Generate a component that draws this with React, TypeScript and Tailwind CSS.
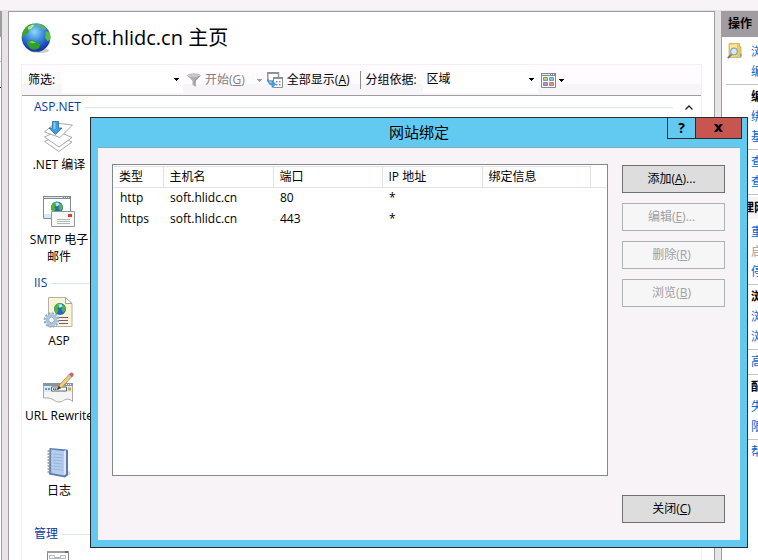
import type { ReactNode } from 'react';

const Globe = ({ className = '' }: { className?: string }) => (
  <svg viewBox="0 0 32 32" className={className} aria-hidden="true">
    <defs>
      <radialGradient id="sea" cx="0.45" cy="0.3" r="0.75">
        <stop offset="0" stopColor="#8fd8f8" />
        <stop offset="0.4" stopColor="#3f8fe0" />
        <stop offset="0.8" stopColor="#1b3fb4" />
        <stop offset="1" stopColor="#16308c" />
      </radialGradient>
    </defs>
    <ellipse cx="19" cy="29" rx="10" ry="2.4" fill="#b8b8b8" opacity="0.7" />
    <circle cx="15.5" cy="15.5" r="14.8" fill="url(#sea)" />
    <path d="M1 12C3 6 7 2 12 1.300l2 1.700-2 3-3 1-2 4-3.500 3-2.500 1Z" fill="#3fa52e" />
    <path d="M7 5 12 2l2 1.200-3 3-3.500 1.300Z" fill="#b4e8a4" />
    <path d="M16 1.200c4 .3 8 2.500 10.500 6l-3 .3-3-2.500-3.500-.8Z" fill="#5cc040" />
    <path d="m25.500 9 3.300.6c1.400 3 1.800 5.600 1.200 8.400l-2.500 1.500-2.500-3.500Z" fill="#55c040" />
    <path d="M6 20.400 10 18l6 1.500 4 3.500-1.600 3.500-4.600 1.500C10 28 7 25.600 6 20.400Z" fill="#2f9f2c" />
    <path d="m8 20 3.500-1 4 1.600-4 1Z" fill="#7fd45c" />
  </svg>
);

const FunnelIcon = () => (
  <svg viewBox="0 0 14 14" className="h-3.5 w-3.5" aria-hidden="true">
    <path d="M.5 2.500 5.500 8v4l3 1.500V8l5-5.500Z" fill="#b0b0b0" />
    <ellipse cx="7" cy="2.600" rx="6.500" ry="1.800" fill="#cccccc" stroke="#a8a8a8" strokeWidth="0.6" />
    <path d="M7.500 8v5l1 .5V8l4.500-5-2 .6Z" fill="#949494" />
  </svg>
);

const ShowAllIcon = () => (
  <svg viewBox="0 0 16 16" className="h-4 w-4" aria-hidden="true">
    <path d="M.8 1h10.700v8H.8Z" fill="#fff" stroke="#8a939c" strokeWidth="1.400" />
    <path d="M0 0h12v2H0Z" fill="#8a939c" />
    <path d="M6.500 5.500h9v10h-9Z" fill="#fff" stroke="#8a939c" />
    <path d="M6 5h10v2H6Z" fill="#8a939c" />
    <path d="M9 9h1.500v1.500H9Zm3 0h1.500v1.500H12Zm-3 3h1.500v1.500H9Zm3 0h1.500v1.500H12Z" fill="#8288c8" />
    <path d="M1 7c.2 3 1.400 4 4 4V8.800l4 3.500-4 3.300v-2.400C2 13 .8 10.600 1 7Z" fill="#3da4e4" stroke="#2b83c4" strokeWidth="0.500" />
  </svg>
);

const ViewIcon = () => (
  <svg viewBox="0 0 15 15" className="h-[15px] w-[15px]" aria-hidden="true">
    <path d="M.5.500h14v14H.500Z" fill="#fff" stroke="#7f8b95" />
    <path d="M0 0h15v3H0Z" fill="#7f8b95" />
    <path d="M1 1h8v1H1Zm9 0h1v1h-1Zm2 0h1v1h-1Z" fill="#e6ebef" />
    <path d="M2.500 4.500h4v3h-4Z" fill="#b9cf76" stroke="#8c9a68" />
    <path d="M8.500 4.500h4v3h-4Z" fill="#7cc8ea" stroke="#7c9cac" />
    <path d="M2.500 9.500h4v3h-4Z" fill="#a890dc" stroke="#8c84a8" />
    <path d="M8.500 9.500h4v3h-4Z" fill="#ee9078" stroke="#b08880" />
  </svg>
);

const Arrow = ({ className = 'fill-black' }: { className?: string }) => (
  <svg viewBox="0 0 5 3" className={`h-[3px] w-[5px] shrink-0 ${className}`} shapeRendering="crispEdges" aria-hidden="true">
    <path d="M0 0h5v1H0Zm1 1h3v1H1Zm1 1h1v1H2Z" />
  </svg>
);

const CompileIcon = () => (
  <svg viewBox="0 0 32 32" className="h-8 w-8" aria-hidden="true">
    <g fill="#fff" stroke="#949494" strokeWidth="0.8">
      <path d="m1.500 21.500 13-6 14.500 6.500-13 9.500Z" />
      <path d="m1.500 17 13-6 14.500 6.500-13 9.500Z" />
      <path d="M1.500 12 12 3l17.500 2L17 17.500Z" />
    </g>
    <path d="M9.500 1.500h6V8h3.500L12.500 14.500 6 8h3.500Z" fill="#3f9ede" stroke="#1d6cac" strokeWidth="0.8" />
    <path d="M10.500 2.500h2V9h-2Z" fill="#8ccbf2" />
  </svg>
);

const SmtpIcon = () => (
  <svg viewBox="0 0 32 32" className="h-8 w-8" aria-hidden="true">
    <path d="M.5 1.500h27v22H.500Z" fill="#fff" stroke="#7f8b95" />
    <path d="M0 1h28v3H0Z" fill="#7f8b95" />
    <path d="M1 2h19v1H1Zm20 0h1v1h-1Zm2 0h1v1h-1Zm2 0h1v1h-1Z" fill="#dce6ec" />
    <path d="M1 19h26v4H1Z" fill="#d7e8f4" />
    <circle cx="14" cy="12.500" r="6" fill="#2a62cc" />
    <path d="M8.500 10.500c1-2.500 3-4 6-3.600l-1 3-2 2 1 2-1.600 3.600c-2.400-1-3-4-2.400-7Zm8-2.600 2.600 1.800.6 3.500-2.500 3-1.700-3Z" fill="#4cb834" />
    <path d="m12.500 8 3-.5 1 2.500-3 1.500Z" fill="#b0e8f8" />
    <path d="M8.500 16.500h23v15h-23Z" fill="#f8f8f6" stroke="#949494" />
    <path d="M25 19h4v3h-4Z" fill="#dc3c30" />
    <path d="M14 24.500h13M14 26.500h13M14 28.500h13" stroke="#a0a6ac" strokeWidth="0.8" />
  </svg>
);

const AspIcon = () => (
  <svg viewBox="0 0 32 32" className="h-8 w-8" aria-hidden="true">
    <path d="M5.500 1.500h17l6.500 6v23H5.500Z" fill="#fcf3d4" stroke="#b4b2a8" />
    <path d="M22.500 1.500v6h6.500Z" fill="#fff" stroke="#a8a69c" />
    <circle cx="17" cy="13" r="6" fill="#2a62cc" />
    <path d="M11.500 11c1-2.500 3-4 6-3.600l-1 3-2 2 1 2-1.600 3.600c-2.400-1-3-4-2.400-7Zm8-2.600 2.600 1.800.6 3.500-2.500 3-1.700-3Z" fill="#4cb834" />
    <path d="m15.500 8.500 3-.5 1 2.500-3 1.500Z" fill="#b0e8f8" />
    <path d="M16 21.500h9M16 24.500h9M16 27.500h9" stroke="#6c5c78" />
    <circle cx="8.500" cy="24" r="6.800" fill="none" stroke="#8fa9c2" strokeWidth="2" strokeDasharray="2.200 1.360" />
    <circle cx="8.500" cy="24" r="4.500" fill="#fcfcfc" stroke="#a9c5dc" strokeWidth="3" />
    <circle cx="8.500" cy="24" r="2.800" fill="#fff" stroke="#7d9bb8" strokeWidth="0.8" />
  </svg>
);

const RewriteIcon = () => (
  <svg viewBox="0 0 32 32" className="h-8 w-8" aria-hidden="true">
    <path d="M.5 12.500h29v18c-3-3-6-3-9-1s-6 2-9 0-6-3-11-2.500Z" fill="#f5f5f5" stroke="#a8a8a8" />
    <path d="M0 12h30v3H0Z" fill="#8a949c" />
    <path d="M23 13h1v1h-1Zm2 0h1v1h-1Zm2 0h1v1h-1Z" fill="#fff" />
    <path d="M1 15h28v6H1Z" fill="#dcebf5" />
    <path d="M8.500 16h15v4h-15Z" fill="#fff" stroke="#5c646c" />
    <path d="M2 17h2v2H2Zm3 0h2v2H5Z" fill="#4c9cdc" />
    <path d="M25 16.500h3v3h-3Z" fill="#d8a83c" />
    <path d="M10 18.200h6" stroke="#222" strokeWidth="1.200" strokeDasharray="1.500 .5" />
    <path d="m14 18.500 2.500-4.500L26 3.500l2.500 2.500L18.500 17Z" fill="#f6cc7c" stroke="#a07c44" strokeWidth="0.7" />
    <path d="m14 18.500 2-3.500 2 2Z" fill="#3c3024" />
    <path d="m25.500 4 2-2.300c1.500-1 4 1 3 3l-2 2Z" fill="#d8606c" />
    <path d="m24.500 5 1.400-1.400 3 2.700-1.400 1.200Z" fill="#b8c4cc" />
  </svg>
);

const LogIcon = () => (
  <svg viewBox="0 0 32 32" className="h-8 w-8" aria-hidden="true">
    <path d="m23 31 5-3-2-4Z" fill="#d8d8d8" />
    <path d="M6.500 2 23.500 3.500c1.200 0 1.500.5 1.500 1.500V29l-3 2.500L6 28.500Z" fill="#5a7ab4" />
    <path d="M8 3.500 21 5v24.500L8 27Z" fill="#b4cdec" />
    <path d="m21 5 2-1v24l-2 1.500Z" fill="#dfe6f2" />
    <path d="m10 8 10 1M10 11l10 1M10 14l10 1M10 17l10 1M10 20l10 1M10 23l10 1" stroke="#8fb0dc" strokeWidth="0.8" />
    <path d="M4.500 5h4m-4 3h4m-4 3h4m-4 3h4m-4 3h4m-4 3h4m-4 3h4m-4 3h4" stroke="#8c949c" strokeWidth="1.300" />
  </svg>
);

const FormIcon = () => (
  <svg viewBox="0 0 32 32" className="h-8 w-8" aria-hidden="true">
    <path d="M4.500 4.500h21v24h-21Z" fill="#fff" stroke="#85898c" />
    <path d="M4 4h22v2H4Z" fill="#9a9ea2" />
    <path d="M22 4h3v2h-3Z" fill="#5c6c7c" />
    <path d="M6.500 8.500h5v2h6v-2h5v3h-16Zm0 5h16v12h-16Z" fill="#f4f4f4" stroke="#b4b8bc" />
  </svg>
);

const FolderIcon = () => (
  <svg viewBox="0 0 16 16" className="h-4 w-4" aria-hidden="true">
    <path d="M2 .5h10.500v3H14v11H2Z" fill="#ecc95c" stroke="#d4b04c" strokeWidth="0.8" />
    <path d="M3 2 10 1v12l-7 1Z" fill="#f9e49c" />
    <path d="M13 10.500h1.500v3H13Z" fill="#57a8dc" />
    <path d="M5 11 .8 15.200" stroke="#787878" strokeWidth="1.800" />
    <circle cx="7" cy="8.500" r="3.300" fill="#d4ecf8" stroke="#8ca4b4" strokeWidth="1.200" />
  </svg>
);

const groups = [
  {
    name: 'ASP.NET',
    items: [
      { label: '.NET 编译', icon: <CompileIcon /> },
      { label: 'SMTP 电子邮件', icon: <SmtpIcon /> },
    ],
  },
  {
    name: 'IIS',
    items: [
      { label: 'ASP', icon: <AspIcon /> },
      { label: 'URL Rewrite', icon: <RewriteIcon /> },
      { label: '日志', icon: <LogIcon /> },
    ],
  },
  { name: '管理', items: [{ label: '', icon: <FormIcon /> }] },
];

const FeatureGroup = ({ name, items, first }: { name: string; items: { label: string; icon: ReactNode }[]; first: boolean }) => (
  <section className="pb-2">
    <div className="flex h-5 items-center gap-1 pl-3">
      <h2 className="text-[#0a3a9c]">{name}</h2>
      <div className="h-px flex-1 bg-[#d9e8f5]" />
      <button type="button" aria-label="折叠" className={`flex w-6 justify-center ${first ? '' : 'invisible'}`}>
        <svg viewBox="0 0 8 5" className="h-[5px] w-2" aria-hidden="true">
          <path d="m.5 4.500 3.500-3.500 3.500 3.500" fill="none" stroke="#222" strokeWidth="1.300" />
        </svg>
      </button>
    </div>
    <ul className="mt-[3px] flex flex-col gap-[5px]">
      {items.map(item => (
        <li key={item.label} className="flex min-h-[70px] w-[74px] flex-col items-center gap-1">
          {item.icon}
          <span className="w-[70px] text-center leading-[17px]">{item.label}</span>
        </li>
      ))}
    </ul>
  </section>
);

const Action = ({ children, disabled = false }: { children: ReactNode; disabled?: boolean }) => (
  <a
    href="#"
    aria-disabled={disabled}
    className={`block h-5 whitespace-nowrap pl-[29px] leading-5 ${disabled ? 'text-[#a0a0a0]' : 'text-[#0066cc]'}`}
  >
    {children}
  </a>
);

const ActionTitle = ({ children }: { children: ReactNode }) => (
  <h3 className="h-5 whitespace-nowrap pl-[29px] font-bold leading-5">{children}</h3>
);

const Separator = () => <hr className="my-0.5 ml-1 h-px border-0 bg-[#c4c4c4]" />;

const DialogButton = ({ text, hotkey, more = '', disabled = false }: { text: string; hotkey: string; more?: string; disabled?: boolean }) => (
  <button
    type="button"
    disabled={disabled}
    className="h-7 border border-[#707070] bg-[#dddddd] pr-1 disabled:border-[#adb2b5] disabled:bg-[#f7f6f7] disabled:text-[#a0a0a0]"
  >
    {text}(<span className="underline">{hotkey}</span>){more}
  </button>
);

const bindings = [
  { type: 'http', host: 'soft.hlidc.cn', port: '80', ip: '*' },
  { type: 'https', host: 'soft.hlidc.cn', port: '443', ip: '*' },
];

const BindingsDialog = () => (
  <div
    role="dialog"
    aria-labelledby="dialog-title"
    className="absolute bottom-3 left-[90px] right-[10px] top-[117px] flex flex-col border border-[#2b2b2b] bg-[#62caf0]"
  >
    <div className="grid h-[29px] grid-cols-[1fr_auto_1fr]">
      <h2 id="dialog-title" className="col-start-2 text-[15px] leading-7">网站绑定</h2>
      <div className="-mt-px mr-[5px] flex h-[22px] justify-self-end border border-[#2b2b2b] text-sm font-bold">
        <button type="button" aria-label="帮助" className="w-[27px] leading-5">?</button>
        <button type="button" aria-label="关闭" className="flex w-[46px] items-center justify-center border-l border-[#2b2b2b] bg-[#c75650]">
          <svg viewBox="0 0 9 8" className="h-2 w-[9px]" aria-hidden="true">
            <path d="M0 0h3l1.500 2L6 0h3L6 4l3 4H6L4.500 6 3 8H0l3-4Z" fill="#000" />
          </svg>
        </button>
      </div>
    </div>
    <div className="mx-[7px] mb-[7px] flex flex-1 gap-3.5 border-t border-[#78adc8] bg-[#f7f3f7] pb-[17px] pl-3.5 pr-[15px] pt-4">
      <div className="mb-[47px] flex-1 border border-[#828790] bg-white pr-px pt-px">
        <table className="w-full table-fixed border-collapse text-left">
          <colgroup>
            <col className="w-[50px]" />
            <col className="w-[110px]" />
            <col className="w-[109px]" />
            <col className="w-[100px]" />
            <col className="w-[108px]" />
            <col />
          </colgroup>
          <thead>
            <tr className="h-[21px] border-b border-[#e5e0e5]">
              {['类型', '主机名', '端口', 'IP 地址', '绑定信息'].map(title => (
                <th key={title} className="border-r border-t border-[#e5e0e5] pl-1.5 font-normal leading-5">{title}</th>
              ))}
              <td />
            </tr>
          </thead>
          <tbody>
            {bindings.map(row => (
              <tr key={row.type} className="h-[21px] leading-5">
                <td className="pl-[7px]">{row.type}</td>
                <td className="pl-[7px]">{row.host}</td>
                <td className="pl-[7px]">{row.port}</td>
                <td className="pl-[7px]">{row.ip}</td>
                <td />
                <td />
              </tr>
            ))}
          </tbody>
        </table>
      </div>
      <div className="flex w-[103px] flex-col gap-2.5 pt-px">
        <DialogButton text="添加" hotkey="A" more="..." />
        <DialogButton text="编辑" hotkey="E" more="..." disabled />
        <DialogButton text="删除" hotkey="R" disabled />
        <DialogButton text="浏览" hotkey="B" disabled />
        <div className="mt-auto flex flex-col">
          <DialogButton text="关闭" hotkey="C" />
        </div>
      </div>
    </div>
  </div>
);

const Toolbar = () => (
  <div className="flex h-[31px] items-center border-b border-[#a09ca0] bg-linear-to-b from-[#fffbff] from-65% to-[#f7f5f7] to-65% pl-1.5">
    <label htmlFor="filter" className="w-[34px]">筛选:</label>
    <div className="flex h-[28px] w-[121px] items-center self-start bg-white pr-1">
      <input id="filter" type="text" className="min-w-0 flex-1 bg-transparent px-1 outline-none" />
      <button type="button" aria-label="筛选历史"><Arrow /></button>
    </div>
    <button type="button" className="ml-1 flex items-center gap-1 text-[#808080]">
      <FunnelIcon />
      <span>开始(<span className="underline">G</span>)</span>
      <span className="ml-2"><Arrow className="fill-[#a0a0a0]" /></span>
    </button>
    <button type="button" className="ml-[5px] flex items-center gap-1">
      <ShowAllIcon />
      <span>全部显示(<span className="underline">A</span>)</span>
    </button>
    <div className="ml-2.5 h-[18px] w-px bg-[#908c90]" />
    <label htmlFor="group" className="ml-[5px] w-[57px]">分组依据:</label>
    <div className="grid h-[28px] w-[115px] items-center self-start bg-white">
      <select id="group" className="col-start-1 row-start-1 w-full appearance-none bg-transparent pl-1">
        <option>区域</option>
      </select>
      <span className="pointer-events-none col-start-1 row-start-1 mr-1 justify-self-end"><Arrow /></span>
    </div>
    <button type="button" aria-label="视图" className="ml-[3px] flex items-center gap-[3px]">
      <ViewIcon />
      <Arrow />
    </button>
  </div>
);

export default function App() {
  return (
    <div className="relative flex h-screen flex-col overflow-hidden bg-[#e7e3e7] text-xs text-black [font-family:'Open_Sans','Noto_Sans_CJK_SC',sans-serif]">
      <div className="h-[11px] shrink-0 border-b border-[#e5e0e4] bg-[#f7f3f7]" />
      <div className="flex min-h-0 flex-1">
        <div className="flex w-0.5 flex-col border-r border-[#a09ca0] bg-white">
          <div className="h-[26px] bg-[#a09ca0]" />
          <div className="mt-6 h-px bg-[#c4c4c4]" />
          <div className="mt-[25px] h-px bg-black" />
        </div>
        <main className="ml-1.5 flex-1 overflow-hidden border-x border-t border-[#a09ca0] bg-white pl-3 pr-3">
          <header className="flex h-[52px] items-center gap-[19px]">
            <Globe className="h-8 w-[31px]" />
            <h1 className="text-xl leading-7">soft.hlidc.cn 主页</h1>
          </header>
          <div className="border border-[#f5eff5]">
            <Toolbar />
            <div className="pt-px">
              {groups.map((group, i) => (
                <FeatureGroup key={group.name} {...group} first={i === 0} />
              ))}
            </div>
          </div>
        </main>
        <aside className="ml-1.5 w-[37px] shrink-0 overflow-hidden border-l border-[#a09ca0] bg-white">
          <h2 className="mb-[5px] h-[26px] whitespace-nowrap bg-[#a09ca0] pl-1.5 font-bold leading-[26px]">操作</h2>
          <div className="relative">
            <span className="absolute left-[5px] top-px"><FolderIcon /></span>
            <Action>浏览</Action>
          </div>
          <Action>编辑</Action>
          <Separator />
          <ActionTitle>编辑</ActionTitle>
          <Action>绑定</Action>
          <Action>基本</Action>
          <Separator />
          <Action>查看</Action>
          <Action>查看</Action>
          <Separator />
          <h3 className="mb-[3px] h-[22px] whitespace-nowrap bg-[#f7f3f7] pl-2 font-bold leading-[22px]">管理网站</h3>
          <Action>重新</Action>
          <Action disabled>启动</Action>
          <Action>停止</Action>
          <Separator />
          <ActionTitle>浏览</ActionTitle>
          <Action>浏览</Action>
          <Action>浏览</Action>
          <Separator />
          <Action>高级</Action>
          <Separator />
          <ActionTitle>配置</ActionTitle>
          <Action>失败</Action>
          <Action>限制</Action>
          <Separator />
          <Action>帮助</Action>
        </aside>
      </div>
      <BindingsDialog />
    </div>
  );
}
